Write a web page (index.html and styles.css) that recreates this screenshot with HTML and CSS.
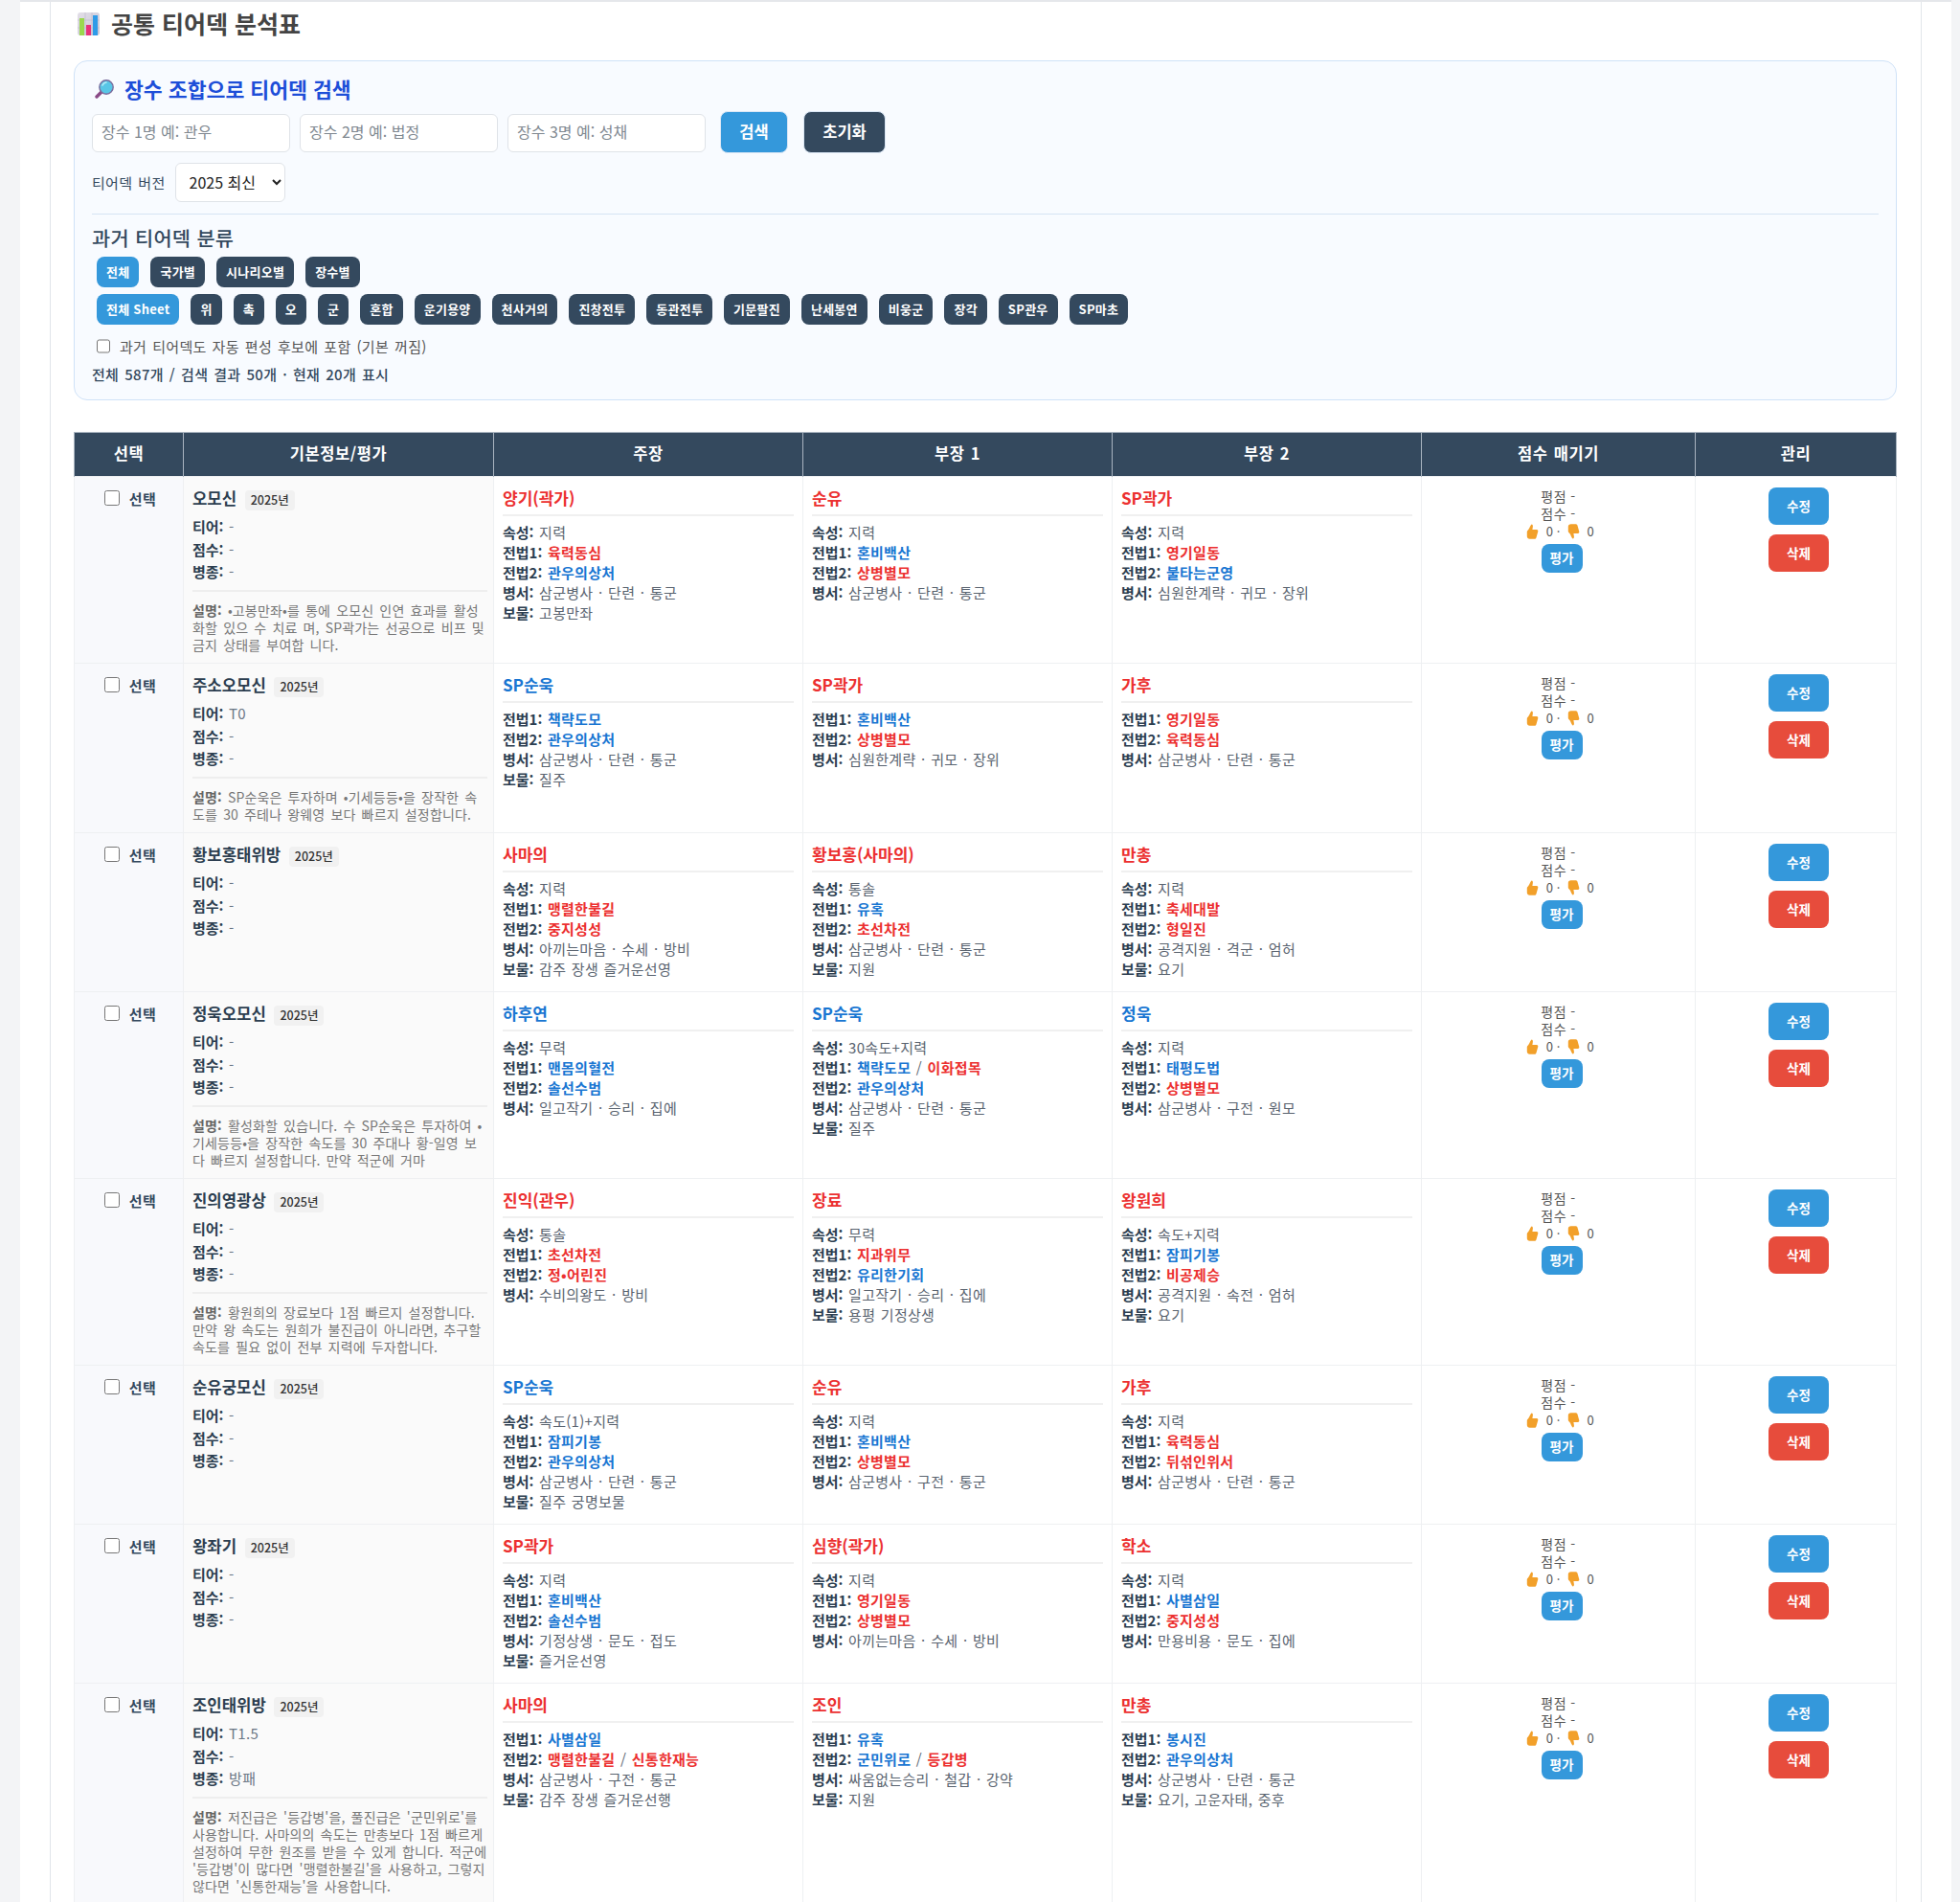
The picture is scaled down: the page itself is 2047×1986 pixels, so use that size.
FILE: index.html
```html
<!DOCTYPE html>
<html lang="ko">
<head>
    <meta charset="UTF-8">
    <meta name="viewport" content="width=device-width, initial-scale=1.0">
    <title>공통 티어덱 분석표</title>
    <link rel="stylesheet" href="styles.css">
</head>
<body>
    <div class="page">
        <main class="sheet">
            <h1 class="title">
                <svg class="emoji_chart" viewBox="0 0 23 24"><defs><linearGradient id="chart_bg" x1="0" y1="0" x2="1" y2="1"><stop offset="0" stop-color="#e3dfe8"/><stop offset="1" stop-color="#c9c6d6"/></linearGradient></defs><rect width="23" height="24" rx="3" fill="url(#chart_bg)"/><path d="M8 0v24M15 0v24M0 8h23M0 16h23" stroke="#b5b0c4" stroke-width=".5"/><rect x="2" y="6" width="5" height="18" fill="#9ad84e"/><rect x="9" y="13" width="5" height="11" fill="#e8327a"/><rect x="16" y="3" width="5" height="21" fill="#2f9be8"/></svg>
                공통 티어덱 분석표
            </h1>

            <section class="search_panel">
                <h2 class="search_title">
                    <svg class="emoji_glass" viewBox="0 0 20 20"><path d="M8 12 2 18" stroke="#8a4a86" stroke-width="3.4" stroke-linecap="round"/><circle cx="12" cy="8" r="7.2" fill="#58c6e6" stroke="#7b6c9c" stroke-width="1.4"/><path d="M8 6a5 5 0 0 1 4-3" stroke="#b8edf8" stroke-width="1.6" fill="none" stroke-linecap="round"/></svg>
                    장수 조합으로 티어덱 검색
                </h2>
                <div class="search_row">
                    <input class="search_input" placeholder="장수 1명 예: 관우">
                    <input class="search_input" placeholder="장수 2명 예: 법정">
                    <input class="search_input" placeholder="장수 3명 예: 성채">
                    <button class="btn_search">검색</button>
                    <button class="btn_reset">초기화</button>
                </div>
                <div class="version_row">
                    <label class="version_label">티어덱 버전</label>
                    <select class="version_select"><option>2025 최신</option></select>
                </div>
                <hr class="panel_line">
                <h3 class="past_title">과거 티어덱 분류</h3>
                <div class="pill_row">
                    <button class="pill on">전체</button>
                    <button class="pill">국가별</button>
                    <button class="pill">시나리오별</button>
                    <button class="pill">장수별</button>
                </div>
                <div class="pill_row second">
                    <button class="pill on">전체 Sheet</button>
                    <button class="pill">위</button>
                    <button class="pill">촉</button>
                    <button class="pill">오</button>
                    <button class="pill">군</button>
                    <button class="pill">혼합</button>
                    <button class="pill">운기용양</button>
                    <button class="pill">천사거의</button>
                    <button class="pill">진창전투</button>
                    <button class="pill">동관전투</button>
                    <button class="pill">기문팔진</button>
                    <button class="pill">난세봉연</button>
                    <button class="pill">비웅군</button>
                    <button class="pill">장각</button>
                    <button class="pill">SP관우</button>
                    <button class="pill">SP마초</button>
                </div>
                <label class="past_check"><input type="checkbox"> 과거 티어덱도 자동 편성 후보에 포함 (기본 꺼짐)</label>
                <p class="count_text">전체 587개 / 검색 결과 50개 · 현재 20개 표시</p>
            </section>

            <table class="deck_table">
                <colgroup>
                    <col class="col_select"><col class="col_info"><col class="col_hero"><col class="col_hero"><col class="col_hero"><col class="col_score"><col class="col_manage">
                </colgroup>
                <thead>
                    <tr><th>선택</th><th>기본정보/평가</th><th>주장</th><th>부장 1</th><th>부장 2</th><th>점수 매기기</th><th>관리</th></tr>
                </thead>
                <tbody>
                    <tr>
                        <td class="select_cell"><label class="select_label"><input type="checkbox">선택</label></td>
                        <td class="info_cell">
                            <div class="deck_name">오모신 <span class="year_tag">2025년</span></div>
                            <div class="info_line"><b>티어:</b> -</div>
                            <div class="info_line"><b>점수:</b> -</div>
                            <div class="info_line"><b>병종:</b> -</div>
                            <p class="deck_desc"><b>설명:</b> •고봉만좌•를 통에 오모신 인연 효과를 활성화할 있으 수 치료 며, SP곽가는 선공으로 비프 및 금지 상태를 부여합 니다.</p>
                        </td>
                        <td><div class="hero red">양기(곽가)</div><div class="line"><b>속성:</b> 지력</div><div class="line"><b>전법1:</b> <span class="red">육력동심</span></div><div class="line"><b>전법2:</b> <span class="blue">관우의상처</span></div><div class="line"><b>병서:</b> 삼군병사 · 단련 · 통군</div><div class="line"><b>보물:</b> 고봉만좌</div></td>
                        <td><div class="hero red">순유</div><div class="line"><b>속성:</b> 지력</div><div class="line"><b>전법1:</b> <span class="blue">혼비백산</span></div><div class="line"><b>전법2:</b> <span class="red">상병별모</span></div><div class="line"><b>병서:</b> 삼군병사 · 단련 · 통군</div></td>
                        <td><div class="hero red">SP곽가</div><div class="line"><b>속성:</b> 지력</div><div class="line"><b>전법1:</b> <span class="red">영기일동</span></div><div class="line"><b>전법2:</b> <span class="blue">불타는군영</span></div><div class="line"><b>병서:</b> 심원한계략 · 귀모 · 장위</div></td>
                        <td class="score_cell">평점 -<br>점수 -<br><span class="votes"><svg class="thumb" viewBox="0 0 13 16"><path d="M5.5 0.5c1.4 0 1.6 1.4 1.3 3L6.4 6h4.4c1.4 0 1.8 1.2 1.4 2.2l-1.7 6c-.3 1-1 1.5-2 1.5H3.6C2 15.7.8 14.6.8 13V8.5c0-1 .6-1.6 1.3-2.3C3.6 4.6 4 2 5.5.5z" fill="#f2a02a"/></svg> 0 · <svg class="thumb" viewBox="0 0 13 16"><path d="M5.5 15.5c1.4 0 1.6-1.4 1.3-3L6.4 10h4.4c1.4 0 1.8-1.2 1.4-2.2l-1.7-6c-.3-1-1-1.5-2-1.5H3.6C2 .3.8 1.4.8 3v4.5c0 1 .6 1.6 1.3 2.3 1.5 1.6 1.9 4.2 3.4 5.7z" fill="#f2a02a"/></svg> 0</span><br><button class="btn_rate">평가</button></td>
                        <td class="manage_cell"><button class="btn_edit">수정</button><button class="btn_delete">삭제</button></td>
                    </tr>
                    <tr>
                        <td class="select_cell"><label class="select_label"><input type="checkbox">선택</label></td>
                        <td class="info_cell">
                            <div class="deck_name">주소오모신 <span class="year_tag">2025년</span></div>
                            <div class="info_line"><b>티어:</b> T0</div>
                            <div class="info_line"><b>점수:</b> -</div>
                            <div class="info_line"><b>병종:</b> -</div>
                            <p class="deck_desc"><b>설명:</b> SP순욱은 투자하며 •기세등등•을 장작한 속도를 30 주테나 왕웨영 보다 빠르지 설정합니다.</p>
                        </td>
                        <td><div class="hero blue">SP순욱</div><div class="line"><b>전법1:</b> <span class="blue">책략도모</span></div><div class="line"><b>전법2:</b> <span class="blue">관우의상처</span></div><div class="line"><b>병서:</b> 삼군병사 · 단련 · 통군</div><div class="line"><b>보물:</b> 질주</div></td>
                        <td><div class="hero red">SP곽가</div><div class="line"><b>전법1:</b> <span class="blue">혼비백산</span></div><div class="line"><b>전법2:</b> <span class="red">상병별모</span></div><div class="line"><b>병서:</b> 심원한계략 · 귀모 · 장위</div></td>
                        <td><div class="hero red">가후</div><div class="line"><b>전법1:</b> <span class="red">영기일동</span></div><div class="line"><b>전법2:</b> <span class="red">육력동심</span></div><div class="line"><b>병서:</b> 삼군병사 · 단련 · 통군</div></td>
                        <td class="score_cell">평점 -<br>점수 -<br><span class="votes"><svg class="thumb" viewBox="0 0 13 16"><path d="M5.5 0.5c1.4 0 1.6 1.4 1.3 3L6.4 6h4.4c1.4 0 1.8 1.2 1.4 2.2l-1.7 6c-.3 1-1 1.5-2 1.5H3.6C2 15.7.8 14.6.8 13V8.5c0-1 .6-1.6 1.3-2.3C3.6 4.6 4 2 5.5.5z" fill="#f2a02a"/></svg> 0 · <svg class="thumb" viewBox="0 0 13 16"><path d="M5.5 15.5c1.4 0 1.6-1.4 1.3-3L6.4 10h4.4c1.4 0 1.8-1.2 1.4-2.2l-1.7-6c-.3-1-1-1.5-2-1.5H3.6C2 .3.8 1.4.8 3v4.5c0 1 .6 1.6 1.3 2.3 1.5 1.6 1.9 4.2 3.4 5.7z" fill="#f2a02a"/></svg> 0</span><br><button class="btn_rate">평가</button></td>
                        <td class="manage_cell"><button class="btn_edit">수정</button><button class="btn_delete">삭제</button></td>
                    </tr>
                    <tr>
                        <td class="select_cell"><label class="select_label"><input type="checkbox">선택</label></td>
                        <td class="info_cell">
                            <div class="deck_name">황보홍태위방 <span class="year_tag">2025년</span></div>
                            <div class="info_line"><b>티어:</b> -</div>
                            <div class="info_line"><b>점수:</b> -</div>
                            <div class="info_line"><b>병종:</b> -</div>
                        </td>
                        <td><div class="hero red">사마의</div><div class="line"><b>속성:</b> 지력</div><div class="line"><b>전법1:</b> <span class="red">맹렬한불길</span></div><div class="line"><b>전법2:</b> <span class="red">중지성성</span></div><div class="line"><b>병서:</b> 아끼는마음 · 수세 · 방비</div><div class="line"><b>보물:</b> 감주 장생 즐거운선영</div></td>
                        <td><div class="hero red">황보홍(사마의)</div><div class="line"><b>속성:</b> 통솔</div><div class="line"><b>전법1:</b> <span class="blue">유혹</span></div><div class="line"><b>전법2:</b> <span class="red">초선차전</span></div><div class="line"><b>병서:</b> 삼군병사 · 단련 · 통군</div><div class="line"><b>보물:</b> 지원</div></td>
                        <td><div class="hero red">만총</div><div class="line"><b>속성:</b> 지력</div><div class="line"><b>전법1:</b> <span class="red">축세대발</span></div><div class="line"><b>전법2:</b> <span class="red">형일진</span></div><div class="line"><b>병서:</b> 공격지원 · 격군 · 엄허</div><div class="line"><b>보물:</b> 요기</div></td>
                        <td class="score_cell">평점 -<br>점수 -<br><span class="votes"><svg class="thumb" viewBox="0 0 13 16"><path d="M5.5 0.5c1.4 0 1.6 1.4 1.3 3L6.4 6h4.4c1.4 0 1.8 1.2 1.4 2.2l-1.7 6c-.3 1-1 1.5-2 1.5H3.6C2 15.7.8 14.6.8 13V8.5c0-1 .6-1.6 1.3-2.3C3.6 4.6 4 2 5.5.5z" fill="#f2a02a"/></svg> 0 · <svg class="thumb" viewBox="0 0 13 16"><path d="M5.5 15.5c1.4 0 1.6-1.4 1.3-3L6.4 10h4.4c1.4 0 1.8-1.2 1.4-2.2l-1.7-6c-.3-1-1-1.5-2-1.5H3.6C2 .3.8 1.4.8 3v4.5c0 1 .6 1.6 1.3 2.3 1.5 1.6 1.9 4.2 3.4 5.7z" fill="#f2a02a"/></svg> 0</span><br><button class="btn_rate">평가</button></td>
                        <td class="manage_cell"><button class="btn_edit">수정</button><button class="btn_delete">삭제</button></td>
                    </tr>
                    <tr>
                        <td class="select_cell"><label class="select_label"><input type="checkbox">선택</label></td>
                        <td class="info_cell">
                            <div class="deck_name">정욱오모신 <span class="year_tag">2025년</span></div>
                            <div class="info_line"><b>티어:</b> -</div>
                            <div class="info_line"><b>점수:</b> -</div>
                            <div class="info_line"><b>병종:</b> -</div>
                            <p class="deck_desc"><b>설명:</b> 활성화할 있습니다. 수 SP순욱은 투자하여 •<wbr>기세등등•을 장작한 속도를 30 주대나 황-일영 보다 빠르지 설정합니다. 만약 적군에 거마</p>
                        </td>
                        <td><div class="hero blue">하후연</div><div class="line"><b>속성:</b> 무력</div><div class="line"><b>전법1:</b> <span class="blue">맨몸의혈전</span></div><div class="line"><b>전법2:</b> <span class="blue">솔선수범</span></div><div class="line"><b>병서:</b> 일고작기 · 승리 · 집에</div></td>
                        <td><div class="hero blue">SP순욱</div><div class="line"><b>속성:</b> 30속도+지력</div><div class="line"><b>전법1:</b> <span class="blue">책략도모</span> / <span class="red">이화접목</span></div><div class="line"><b>전법2:</b> <span class="blue">관우의상처</span></div><div class="line"><b>병서:</b> 삼군병사 · 단련 · 통군</div><div class="line"><b>보물:</b> 질주</div></td>
                        <td><div class="hero blue">정욱</div><div class="line"><b>속성:</b> 지력</div><div class="line"><b>전법1:</b> <span class="blue">태평도법</span></div><div class="line"><b>전법2:</b> <span class="red">상병별모</span></div><div class="line"><b>병서:</b> 삼군병사 · 구전 · 원모</div></td>
                        <td class="score_cell">평점 -<br>점수 -<br><span class="votes"><svg class="thumb" viewBox="0 0 13 16"><path d="M5.5 0.5c1.4 0 1.6 1.4 1.3 3L6.4 6h4.4c1.4 0 1.8 1.2 1.4 2.2l-1.7 6c-.3 1-1 1.5-2 1.5H3.6C2 15.7.8 14.6.8 13V8.5c0-1 .6-1.6 1.3-2.3C3.6 4.6 4 2 5.5.5z" fill="#f2a02a"/></svg> 0 · <svg class="thumb" viewBox="0 0 13 16"><path d="M5.5 15.5c1.4 0 1.6-1.4 1.3-3L6.4 10h4.4c1.4 0 1.8-1.2 1.4-2.2l-1.7-6c-.3-1-1-1.5-2-1.5H3.6C2 .3.8 1.4.8 3v4.5c0 1 .6 1.6 1.3 2.3 1.5 1.6 1.9 4.2 3.4 5.7z" fill="#f2a02a"/></svg> 0</span><br><button class="btn_rate">평가</button></td>
                        <td class="manage_cell"><button class="btn_edit">수정</button><button class="btn_delete">삭제</button></td>
                    </tr>
                    <tr>
                        <td class="select_cell"><label class="select_label"><input type="checkbox">선택</label></td>
                        <td class="info_cell">
                            <div class="deck_name">진의영광상 <span class="year_tag">2025년</span></div>
                            <div class="info_line"><b>티어:</b> -</div>
                            <div class="info_line"><b>점수:</b> -</div>
                            <div class="info_line"><b>병종:</b> -</div>
                            <p class="deck_desc"><b>설명:</b> 황원희의 장료보다 1점 빠르지 설정합니다. 만약 왕 속도는 원희가 불진급이 아니라면, 추구할 속도를 필요 없이 전부 지력에 두자합니다.</p>
                        </td>
                        <td><div class="hero red">진익(관우)</div><div class="line"><b>속성:</b> 통솔</div><div class="line"><b>전법1:</b> <span class="red">초선차전</span></div><div class="line"><b>전법2:</b> <span class="red">정•어린진</span></div><div class="line"><b>병서:</b> 수비의왕도 · 방비</div></td>
                        <td><div class="hero red">장료</div><div class="line"><b>속성:</b> 무력</div><div class="line"><b>전법1:</b> <span class="red">지과위무</span></div><div class="line"><b>전법2:</b> <span class="blue">유리한기회</span></div><div class="line"><b>병서:</b> 일고작기 · 승리 · 집에</div><div class="line"><b>보물:</b> 용평 기정상생</div></td>
                        <td><div class="hero red">왕원희</div><div class="line"><b>속성:</b> 속도+지력</div><div class="line"><b>전법1:</b> <span class="blue">잠피기봉</span></div><div class="line"><b>전법2:</b> <span class="red">비공제승</span></div><div class="line"><b>병서:</b> 공격지원 · 속전 · 엄허</div><div class="line"><b>보물:</b> 요기</div></td>
                        <td class="score_cell">평점 -<br>점수 -<br><span class="votes"><svg class="thumb" viewBox="0 0 13 16"><path d="M5.5 0.5c1.4 0 1.6 1.4 1.3 3L6.4 6h4.4c1.4 0 1.8 1.2 1.4 2.2l-1.7 6c-.3 1-1 1.5-2 1.5H3.6C2 15.7.8 14.6.8 13V8.5c0-1 .6-1.6 1.3-2.3C3.6 4.6 4 2 5.5.5z" fill="#f2a02a"/></svg> 0 · <svg class="thumb" viewBox="0 0 13 16"><path d="M5.5 15.5c1.4 0 1.6-1.4 1.3-3L6.4 10h4.4c1.4 0 1.8-1.2 1.4-2.2l-1.7-6c-.3-1-1-1.5-2-1.5H3.6C2 .3.8 1.4.8 3v4.5c0 1 .6 1.6 1.3 2.3 1.5 1.6 1.9 4.2 3.4 5.7z" fill="#f2a02a"/></svg> 0</span><br><button class="btn_rate">평가</button></td>
                        <td class="manage_cell"><button class="btn_edit">수정</button><button class="btn_delete">삭제</button></td>
                    </tr>
                    <tr>
                        <td class="select_cell"><label class="select_label"><input type="checkbox">선택</label></td>
                        <td class="info_cell">
                            <div class="deck_name">순유궁모신 <span class="year_tag">2025년</span></div>
                            <div class="info_line"><b>티어:</b> -</div>
                            <div class="info_line"><b>점수:</b> -</div>
                            <div class="info_line"><b>병종:</b> -</div>
                        </td>
                        <td><div class="hero blue">SP순욱</div><div class="line"><b>속성:</b> 속도(1)+지력</div><div class="line"><b>전법1:</b> <span class="blue">잠피기봉</span></div><div class="line"><b>전법2:</b> <span class="blue">관우의상처</span></div><div class="line"><b>병서:</b> 삼군병사 · 단련 · 통군</div><div class="line"><b>보물:</b> 질주 궁명보물</div></td>
                        <td><div class="hero red">순유</div><div class="line"><b>속성:</b> 지력</div><div class="line"><b>전법1:</b> <span class="blue">혼비백산</span></div><div class="line"><b>전법2:</b> <span class="red">상병별모</span></div><div class="line"><b>병서:</b> 삼군병사 · 구전 · 통군</div></td>
                        <td><div class="hero red">가후</div><div class="line"><b>속성:</b> 지력</div><div class="line"><b>전법1:</b> <span class="red">육력동심</span></div><div class="line"><b>전법2:</b> <span class="red">뒤섞인위서</span></div><div class="line"><b>병서:</b> 삼군병사 · 단련 · 통군</div></td>
                        <td class="score_cell">평점 -<br>점수 -<br><span class="votes"><svg class="thumb" viewBox="0 0 13 16"><path d="M5.5 0.5c1.4 0 1.6 1.4 1.3 3L6.4 6h4.4c1.4 0 1.8 1.2 1.4 2.2l-1.7 6c-.3 1-1 1.5-2 1.5H3.6C2 15.7.8 14.6.8 13V8.5c0-1 .6-1.6 1.3-2.3C3.6 4.6 4 2 5.5.5z" fill="#f2a02a"/></svg> 0 · <svg class="thumb" viewBox="0 0 13 16"><path d="M5.5 15.5c1.4 0 1.6-1.4 1.3-3L6.4 10h4.4c1.4 0 1.8-1.2 1.4-2.2l-1.7-6c-.3-1-1-1.5-2-1.5H3.6C2 .3.8 1.4.8 3v4.5c0 1 .6 1.6 1.3 2.3 1.5 1.6 1.9 4.2 3.4 5.7z" fill="#f2a02a"/></svg> 0</span><br><button class="btn_rate">평가</button></td>
                        <td class="manage_cell"><button class="btn_edit">수정</button><button class="btn_delete">삭제</button></td>
                    </tr>
                    <tr>
                        <td class="select_cell"><label class="select_label"><input type="checkbox">선택</label></td>
                        <td class="info_cell">
                            <div class="deck_name">왕좌기 <span class="year_tag">2025년</span></div>
                            <div class="info_line"><b>티어:</b> -</div>
                            <div class="info_line"><b>점수:</b> -</div>
                            <div class="info_line"><b>병종:</b> -</div>
                        </td>
                        <td><div class="hero red">SP곽가</div><div class="line"><b>속성:</b> 지력</div><div class="line"><b>전법1:</b> <span class="blue">혼비백산</span></div><div class="line"><b>전법2:</b> <span class="blue">솔선수범</span></div><div class="line"><b>병서:</b> 기정상생 · 문도 · 접도</div><div class="line"><b>보물:</b> 즐거운선영</div></td>
                        <td><div class="hero red">심향(곽가)</div><div class="line"><b>속성:</b> 지력</div><div class="line"><b>전법1:</b> <span class="red">영기일동</span></div><div class="line"><b>전법2:</b> <span class="red">상병별모</span></div><div class="line"><b>병서:</b> 아끼는마음 · 수세 · 방비</div></td>
                        <td><div class="hero red">학소</div><div class="line"><b>속성:</b> 지력</div><div class="line"><b>전법1:</b> <span class="blue">사별삼일</span></div><div class="line"><b>전법2:</b> <span class="red">중지성성</span></div><div class="line"><b>병서:</b> 만용비용 · 문도 · 집에</div></td>
                        <td class="score_cell">평점 -<br>점수 -<br><span class="votes"><svg class="thumb" viewBox="0 0 13 16"><path d="M5.5 0.5c1.4 0 1.6 1.4 1.3 3L6.4 6h4.4c1.4 0 1.8 1.2 1.4 2.2l-1.7 6c-.3 1-1 1.5-2 1.5H3.6C2 15.7.8 14.6.8 13V8.5c0-1 .6-1.6 1.3-2.3C3.6 4.6 4 2 5.5.5z" fill="#f2a02a"/></svg> 0 · <svg class="thumb" viewBox="0 0 13 16"><path d="M5.5 15.5c1.4 0 1.6-1.4 1.3-3L6.4 10h4.4c1.4 0 1.8-1.2 1.4-2.2l-1.7-6c-.3-1-1-1.5-2-1.5H3.6C2 .3.8 1.4.8 3v4.5c0 1 .6 1.6 1.3 2.3 1.5 1.6 1.9 4.2 3.4 5.7z" fill="#f2a02a"/></svg> 0</span><br><button class="btn_rate">평가</button></td>
                        <td class="manage_cell"><button class="btn_edit">수정</button><button class="btn_delete">삭제</button></td>
                    </tr>
                    <tr>
                        <td class="select_cell"><label class="select_label"><input type="checkbox">선택</label></td>
                        <td class="info_cell">
                            <div class="deck_name">조인태위방 <span class="year_tag">2025년</span></div>
                            <div class="info_line"><b>티어:</b> T1.5</div>
                            <div class="info_line"><b>점수:</b> -</div>
                            <div class="info_line"><b>병종:</b> 방패</div>
                            <p class="deck_desc"><b>설명:</b> 저진급은 '등갑병'을, 풀진급은 '군민위로'를 사용합니다. 사마의의 속도는 만총보다 1점 빠르게 설정하여 무한 원조를 받을 수 있게 합니다. 적군에 '등갑병'이 많다면 '맹렬한불길'을 사용하고, 그렇지 않다면 '신통한재능'을 사용합니다.</p>
                        </td>
                        <td><div class="hero red">사마의</div><div class="line"><b>전법1:</b> <span class="blue">사별삼일</span></div><div class="line"><b>전법2:</b> <span class="red">맹렬한불길</span> / <span class="red">신통한재능</span></div><div class="line"><b>병서:</b> 삼군병사 · 구전 · 통군</div><div class="line"><b>보물:</b> 감주 장생 즐거운선행</div></td>
                        <td><div class="hero red">조인</div><div class="line"><b>전법1:</b> <span class="blue">유혹</span></div><div class="line"><b>전법2:</b> <span class="blue">군민위로</span> / <span class="red">등갑병</span></div><div class="line"><b>병서:</b> 싸움없는승리 · 철갑 · 강약</div><div class="line"><b>보물:</b> 지원</div></td>
                        <td><div class="hero red">만총</div><div class="line"><b>전법1:</b> <span class="blue">봉시진</span></div><div class="line"><b>전법2:</b> <span class="blue">관우의상처</span></div><div class="line"><b>병서:</b> 상군병사 · 단련 · 통군</div><div class="line"><b>보물:</b> 요기, 고운자태, 중후</div></td>
                        <td class="score_cell">평점 -<br>점수 -<br><span class="votes"><svg class="thumb" viewBox="0 0 13 16"><path d="M5.5 0.5c1.4 0 1.6 1.4 1.3 3L6.4 6h4.4c1.4 0 1.8 1.2 1.4 2.2l-1.7 6c-.3 1-1 1.5-2 1.5H3.6C2 15.7.8 14.6.8 13V8.5c0-1 .6-1.6 1.3-2.3C3.6 4.6 4 2 5.5.5z" fill="#f2a02a"/></svg> 0 · <svg class="thumb" viewBox="0 0 13 16"><path d="M5.5 15.5c1.4 0 1.6-1.4 1.3-3L6.4 10h4.4c1.4 0 1.8-1.2 1.4-2.2l-1.7-6c-.3-1-1-1.5-2-1.5H3.6C2 .3.8 1.4.8 3v4.5c0 1 .6 1.6 1.3 2.3 1.5 1.6 1.9 4.2 3.4 5.7z" fill="#f2a02a"/></svg> 0</span><br><button class="btn_rate">평가</button></td>
                        <td class="manage_cell"><button class="btn_edit">수정</button><button class="btn_delete">삭제</button></td>
                    </tr>
                </tbody>
            </table>
        </main>
    </div>
</body>
</html>
```

FILE: styles.css
```css
* {
    box-sizing: border-box;
}
html, body {
    height: 100%;
    overflow: hidden;
}
body {
    margin: 0;
    background-color: #f3f4f6;
    font-family: "Noto Sans CJK KR", "Noto Sans", sans-serif;
    font-size: 15px;
    color: #333;
}
button, input, select {
    font-family: inherit;
}
.page {
    min-height: 100vh;
    margin: 0 9px 0 21px;
    padding: 0 31px 40px;
    background-color: #fff;
    border-top: 2px solid #e5e7eb;
}
.sheet {
    min-height: 100vh;
    padding: 0 25px 0 24px;
    background-color: #fff;
    border-left: 1px solid #e1e5ea;
    border-right: 1px solid #e1e5ea;
}
.title {
    display: flex;
    align-items: center;
    gap: 12px;
    height: 43px;
    margin: 0 0 18px;
    font-size: 25px;
    font-weight: 700;
    color: #444;
}
.emoji_chart {
    width: 23px;
    height: 24px;
    margin: 3px 0 0 4px;
}
.search_panel {
    height: 355px;
    padding: 16px 18px 0;
    background-color: #f8fbff;
    border: 1px solid #cfe2f8;
    border-radius: 14px;
}
.search_title {
    display: flex;
    align-items: center;
    gap: 11px;
    height: 24px;
    margin: 0 0 12px;
    padding-left: 3px;
    font-size: 21.6px;
    font-weight: 700;
    color: #1d4ed8;
}
.emoji_glass {
    width: 20px;
    height: 20px;
    margin-top: 2px;
}
.search_row {
    display: flex;
    align-items: flex-start;
    height: 44px;
}
.search_input {
    width: 207px;
    height: 40px;
    margin: 3px 10px 0 0;
    padding: 0 9px 5px;
    font-size: 16px;
    background-color: #fff;
    border: 1px solid #dfe3e8;
    border-radius: 6px;
}
.search_input::placeholder {
    color: #808890;
}
.btn_search, .btn_reset {
    height: 44px;
    padding: 0 0 2px;
    font-size: 16.5px;
    font-weight: 700;
    color: #fff;
    border: 1px solid #dbe7f5;
    border-radius: 8px;
}
.btn_search {
    width: 71px;
    margin-left: 5px;
    background-color: #3498db;
}
.btn_reset {
    width: 86px;
    margin-left: 16px;
    background-color: #34495e;
}
.version_row {
    display: flex;
    align-items: center;
    gap: 10px;
    margin-top: 10px;
}
.version_label {
    font-size: 15px;
    letter-spacing: .02em;
    word-spacing: .1em;
    color: #34495e;
}
.version_select {
    width: 115px;
    height: 41px;
    padding: 0 0 2px 10px;
    font-size: 16px;
    color: #222;
    background-color: #fff;
    border: 1px solid #dfe3e8;
    border-radius: 6px;
}
.panel_line {
    margin: 12px 0 10px;
    border: 0;
    border-top: 1px solid #d6e4f3;
}
.past_title {
    height: 28px;
    margin: 0 0 6px;
    font-size: 20.8px;
    font-weight: 500;
    line-height: 28px;
    letter-spacing: .3px;
    color: #34495e;
}
.pill_row {
    display: flex;
    gap: 12px;
    margin-left: 5px;
}
.pill_row.second {
    margin-top: 7px;
}
.pill {
    height: 32px;
    padding: 0 10px 2px;
    font-size: 13px;
    font-weight: 700;
    letter-spacing: .25px;
    color: #fff;
    white-space: nowrap;
    background-color: #34495e;
    border: 0;
    border-radius: 8px;
}
.pill.on {
    background-color: #3498db;
}
.past_check {
    display: flex;
    align-items: center;
    gap: 10px;
    height: 22px;
    margin: 11px 0 0 5px;
    font-size: 15px;
    letter-spacing: .02em;
    word-spacing: .1em;
    color: #555;
}
.past_check input {
    width: 14px;
    height: 15px;
    margin: 0;
}
.count_text {
    margin: 8px 0 0;
    font-size: 15px;
    font-weight: 500;
    line-height: 22px;
    letter-spacing: .02em;
    word-spacing: .1em;
    color: #34495e;
}
.deck_table {
    width: 1903px;
    margin-top: 33px;
    table-layout: fixed;
    border-collapse: collapse;
}
.col_select {
    width: 114px;
}
.col_info {
    width: 324px;
}
.col_hero {
    width: 323px;
}
.col_score {
    width: 286px;
}
.col_manage {
    width: 210px;
}
.deck_table th {
    height: 46px;
    padding: 0 0 3px;
    font-size: 16.5px;
    font-weight: 700;
    letter-spacing: .033em;
    word-spacing: .07em;
    color: #fff;
    background-color: #34495e;
    border: 1px solid #a9b4c0;
    border-bottom: 0;
}
.deck_table td {
    padding: 10px 9px 13px;
    vertical-align: top;
    line-height: 21px;
    border: 1px solid #eef0f2;
}
.deck_table td.select_cell {
    padding-top: 9px;
    background-color: #f8f9fc;
    text-align: center;
}
.deck_table td.info_cell {
    padding-bottom: 10.5px;
    background-color: #fafafa;
}
.select_label {
    display: inline-flex;
    align-items: center;
    gap: 10px;
    height: 26px;
    margin-left: 3px;
    font-weight: 700;
    letter-spacing: .033em;
    color: #34495e;
}
.select_label input {
    width: 16px;
    height: 16px;
    margin: 0;
}
.deck_name {
    height: 26px;
    margin: -1px 0 6px;
    font-size: 16.7px;
    font-weight: 700;
    line-height: 26px;
    color: #2c3e50;
}
.year_tag {
    display: inline-block;
    height: 21px;
    margin-left: 4px;
    padding: 0 6px;
    font-size: 12.5px;
    font-weight: 500;
    line-height: 20px;
    color: #333;
    background-color: #f1f1f1;
    border-radius: 4px;
    vertical-align: middle;
}
.info_line, .line {
    letter-spacing: .02em;
    word-spacing: .07em;
}
.info_line {
    margin-bottom: 2.5px;
    color: #6b7785;
}
.info_line b, .line b {
    letter-spacing: 0;
    color: #2c3e50;
}
.deck_desc {
    margin: 8.5px -3px 0 0;
    padding-top: 10px;
    font-size: 14px;
    line-height: 18px;
    letter-spacing: .012em;
    word-spacing: .14em;
    color: #777;
    border-top: 2px solid #eee;
}
.deck_desc b {
    color: #666;
}
.hero {
    height: 31px;
    margin-bottom: 6px;
    font-size: 17px;
    font-weight: 700;
    line-height: 24px;
    border-bottom: 2px solid #f0f0f0;
}
.line {
    color: #5a6470;
}
.red {
    font-weight: 700;
    color: #ec3030;
}
.blue {
    font-weight: 700;
    color: #1976d2;
}
.deck_table td.score_cell {
    padding-top: 11px;
    font-size: 14px;
    line-height: 18px;
    letter-spacing: .033em;
    color: #555;
    text-align: center;
}
.votes {
    font-size: 13px;
    letter-spacing: 0;
    white-space: nowrap;
}
.thumb {
    width: 13px;
    height: 16px;
    margin: 0 4px;
    vertical-align: -3px;
}
.btn_rate {
    width: 43px;
    height: 30px;
    margin: 4px 0 0 7px;
    padding: 0 0 2px;
    font-size: 13.5px;
    font-weight: 700;
    color: #fff;
    background-color: #3498db;
    border: 0;
    border-radius: 8px;
}
.manage_cell {
    text-align: center;
}
.btn_edit, .btn_delete {
    display: block;
    width: 63px;
    height: 39px;
    margin: 1px auto 10px;
    padding: 0 0 2px;
    position: relative;
    left: 3px;
    font-size: 13.5px;
    font-weight: 700;
    color: #fff;
    border: 0;
    border-radius: 8px;
}
.btn_edit {
    background-color: #3498db;
}
.btn_delete {
    margin-top: 0;
    background-color: #e74c3c;
}
```
